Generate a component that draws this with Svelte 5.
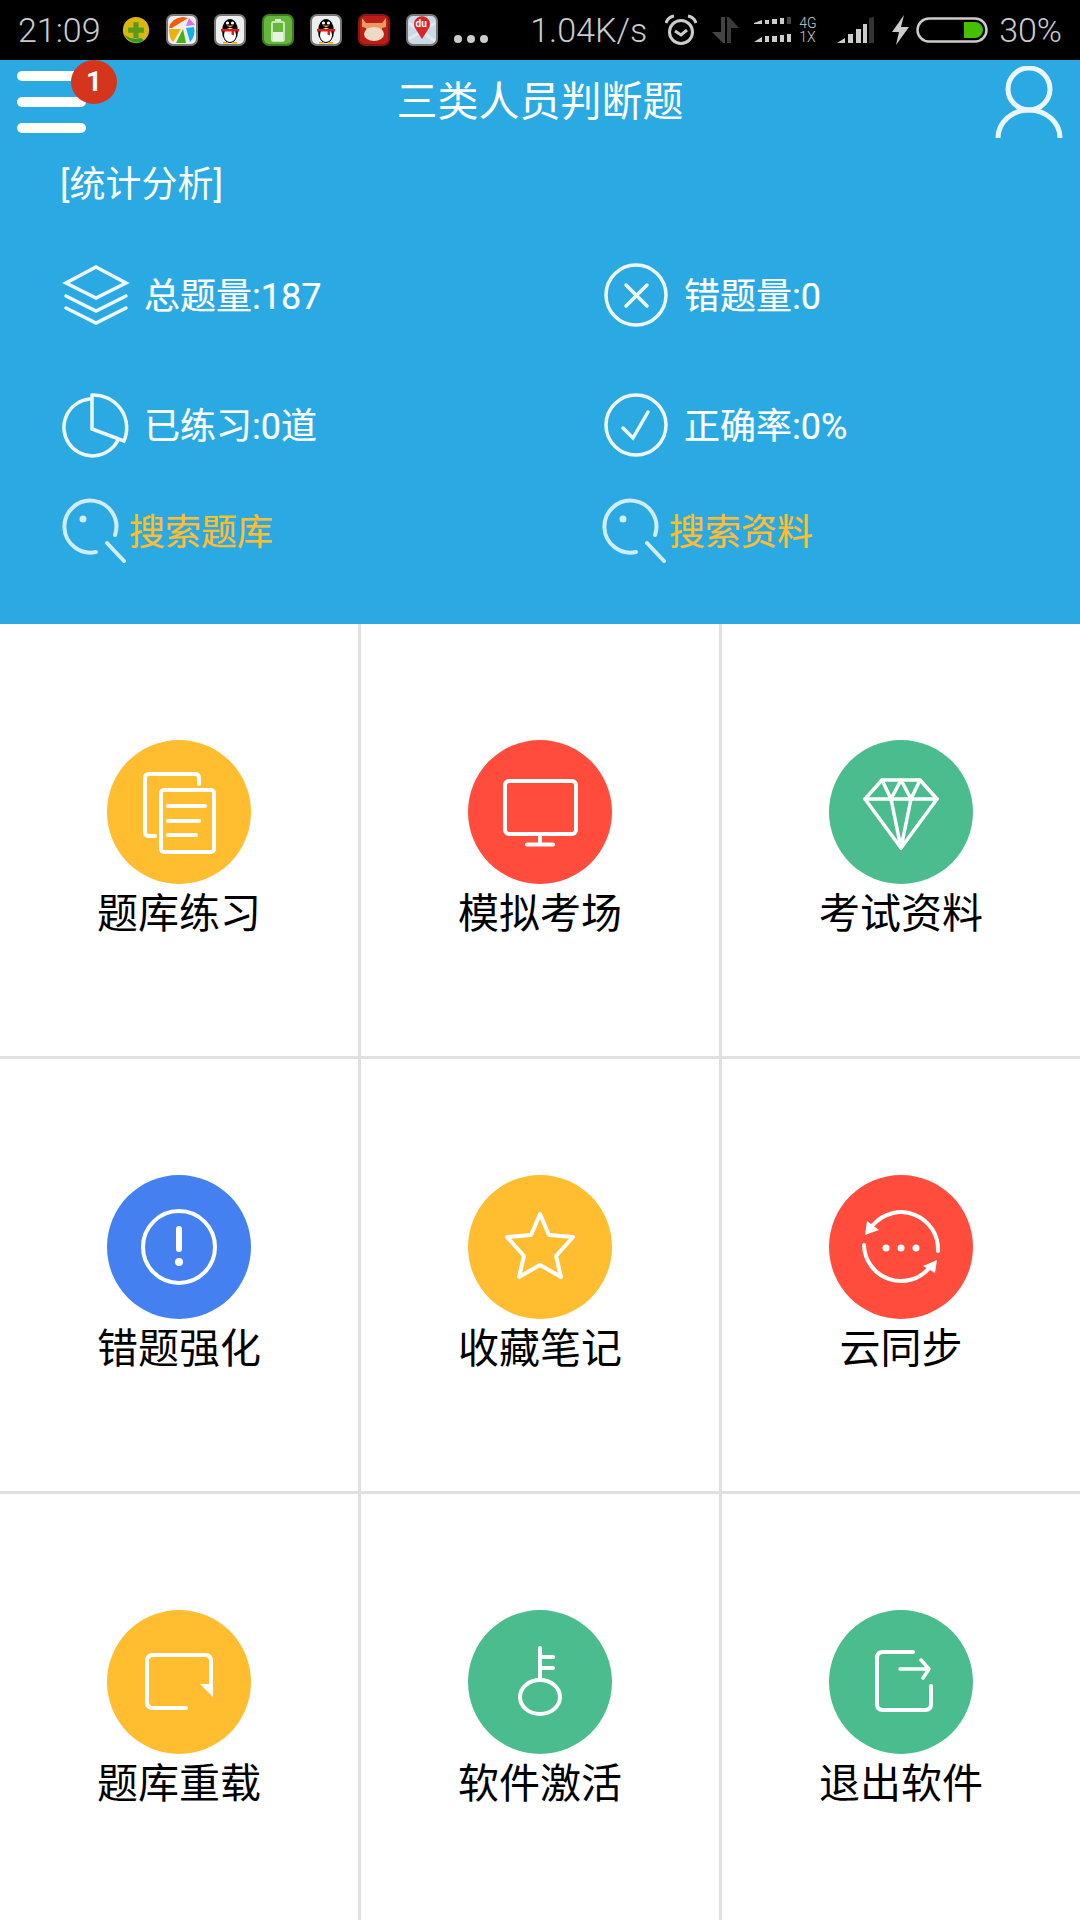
<script>
    const stats = [
        { icon: layersIcon, text: "总题量:187" },
        { icon: wrongIcon, text: "错题量:0" },
        { icon: pieIcon, text: "已练习:0道" },
        { icon: rightIcon, text: "正确率:0%" },
    ];

    const menu = [
        { label: "题库练习", color: "#ffbd2f", icon: docsIcon },
        { label: "模拟考场", color: "#ff4c3c", icon: screenIcon },
        { label: "考试资料", color: "#4bbc8e", icon: gemIcon },
        { label: "错题强化", color: "#4480f0", icon: alertIcon },
        { label: "收藏笔记", color: "#ffbd2f", icon: starIcon },
        { label: "云同步", color: "#ff4c3c", icon: syncIcon },
        { label: "题库重载", color: "#ffbd2f", icon: reloadIcon },
        { label: "软件激活", color: "#4bbc8e", icon: keyIcon },
        { label: "退出软件", color: "#4bbc8e", icon: exitIcon },
    ];
</script>

{#snippet penguin()}
    <svg class="tile" viewBox="0 0 32 32">
        <rect x="1" y="1" width="30" height="30" rx="6" fill="#eee" stroke="#777" stroke-width="2" />
        <ellipse cx="16" cy="17" rx="8" ry="12" fill="#000" />
        <ellipse cx="16" cy="21" rx="6" ry="7" fill="#fff" />
        <circle cx="13.5" cy="9" r="1.6" fill="#fff" />
        <circle cx="18.5" cy="9" r="1.6" fill="#fff" />
        <path d="M12.5 11.5h7l-3.500 2z" fill="#f5a800" />
        <path d="M7 15h18v2.500h-5v4l-2.500-1v-3H7z" fill="#e01b1b" />
        <path d="M9 28h5v1.500H9zM18 28h5v1.500h-5z" fill="#f5a800" />
    </svg>
{/snippet}

{#snippet layersIcon()}
    <svg class="stat-icon" viewBox="0 0 64 64">
        <path d="M32 4 62 20 32 35 2 20z" />
        <path d="M2 33 32 48 62 33" />
        <path d="M2 45 32 60 62 45" />
    </svg>
{/snippet}

{#snippet wrongIcon()}
    <svg class="stat-icon" viewBox="0 0 64 64">
        <circle cx="32" cy="32" r="30" />
        <path d="M22 22 43 43M43 22 22 43" />
    </svg>
{/snippet}

{#snippet pieIcon()}
    <svg class="stat-icon" viewBox="0 0 64 64">
        <path d="M26 6A28.500 28.500 0 1 0 54 47" />
        <path d="M28 2V36L60 48A33 33 0 0 0 28 2" />
    </svg>
{/snippet}

{#snippet rightIcon()}
    <svg class="stat-icon" viewBox="0 0 64 64">
        <circle cx="32" cy="32" r="30" />
        <path d="M19 35 29 45 44 19" />
    </svg>
{/snippet}

{#snippet searchIcon()}
    <svg class="stat-icon search-icon" viewBox="0 0 64 64">
        <path d="M33 53A26 26 0 1 1 52 36" />
        <path d="M44 44 61 62" />
        <circle class="solid" cx="20" cy="20" r="3.500" />
    </svg>
{/snippet}

{#snippet docsIcon()}
    <path d="M92 44V38Q92 34 88 34H42Q38 34 38 38V92Q38 96 42 96H48" />
    <rect x="54" y="50" width="53" height="62" rx="3" />
    <path d="M61 66H98M61 81H92M61 95H89" />
{/snippet}

{#snippet screenIcon()}
    <rect x="37" y="41" width="71" height="53" rx="4" />
    <path d="M72 95V104" />
    <path d="M59 104.500H85" />
{/snippet}

{#snippet gemIcon()}
    <path class="thin" d="M53 40H91L108 59 72 108 36 59Z" />
    <path class="thin" d="M36 59H108M53 40 62 59 72 40 82 59 91 40M62 59 72 108 82 59" />
{/snippet}

{#snippet alertIcon()}
    <circle cx="72" cy="72" r="36" />
    <path class="wide" d="M72 54V74" />
    <circle class="solid" cx="72" cy="87" r="4" />
{/snippet}

{#snippet starIcon()}
    <path d="M72 39 81 60 105 62 88 81 93 102 72 90 51 102 56 81 39 62 63 60Z" />
{/snippet}

{#snippet syncIcon()}
    <path d="M109 76A37 37 0 0 0 44 50" />
    <path d="M35 70A37 37 0 0 0 101 92" />
    <path class="solid" d="M36 60 38 46 50 55Z" />
    <path class="solid" d="M108 85 106 98 94 91Z" />
    <circle class="solid" cx="57" cy="73" r="3.500" />
    <circle class="solid" cx="72" cy="73" r="3.500" />
    <circle class="solid" cx="87" cy="73" r="3.500" />
{/snippet}

{#snippet reloadIcon()}
    <path d="M79 98H46Q40 98 40 92V51Q40 45 46 45H98Q104 45 104 51V78" />
    <path class="solid" d="M93 74H106V87Z" />
{/snippet}

{#snippet keyIcon()}
    <ellipse cx="72" cy="87" rx="20" ry="17" />
    <path d="M72 38V69M72 47H85M72 58H85" />
{/snippet}

{#snippet exitIcon()}
    <path d="M84 42H54Q48 42 48 48V94Q48 100 54 100H96Q102 100 102 94V76" />
    <path class="thin" d="M71 59H99M92 50 100 59 94 68" />
{/snippet}

<div class="page">
    <div class="status-bar">
        <span class="clock">21:09</span>
        <div class="notifs">
            <svg class="tile round" viewBox="0 0 32 32">
                <circle cx="16" cy="16" r="15" fill="#d8b80e" />
                <path d="M3 21a15 15 0 0 0 22 7l-3-3q-12 3-19-4z" fill="#2f9a35" />
                <path d="M13 7h6v6h6v6h-6v6h-6v-6H7v-6h6z" fill="#5b9a1c" />
            </svg>
            <svg class="tile" viewBox="0 0 32 32">
                <rect x="1" y="1" width="30" height="30" rx="6" fill="#eee" stroke="#777" stroke-width="2" />
                <path d="M3 14Q5 4 17 3L22 4 6 14z" fill="#ee5c0c" />
                <path d="M3 15H15L7 28Q3 24 3 15z" fill="#edb00c" />
                <path d="M17 15 20 29H10z" fill="#45b20f" />
                <path d="M20 14 28 13Q30 22 24 28z" fill="#11b2e8" />
                <path d="M23 4 29 11 20 12z" fill="#d674e6" />
            </svg>
            {@render penguin()}
            <svg class="tile" viewBox="0 0 32 32">
                <rect x="1" y="1" width="30" height="30" rx="6" fill="#65b63a" stroke="#3d7d20" stroke-width="2" />
                <path d="M13 5h6v2h-6z" fill="#dcefd2" />
                <rect x="10" y="8" width="12" height="19" rx="1" fill="none" stroke="#e6f4df" stroke-width="1.500" />
                <rect x="11" y="18" width="10" height="9" fill="#e6f4df" />
            </svg>
            {@render penguin()}
            <svg class="tile" viewBox="0 0 32 32">
                <rect x="1" y="1" width="30" height="30" rx="6" fill="#bb1e16" stroke="#8a1610" stroke-width="2" />
                <path d="M4 4l4 5h16l4-5v9l-4 1v4H8v-4l-4-1z" fill="#e89a60" />
                <ellipse cx="16" cy="20" rx="10" ry="7" fill="#eed9c4" />
            </svg>
            <div class="map-tile">
                <svg class="tile" viewBox="0 0 32 32">
                    <rect x="1" y="1" width="30" height="30" rx="6" fill="#c9dbe6" stroke="#777" stroke-width="2" />
                    <path d="M3 25 29 9M3 9 29 27" stroke="#e8e8e8" stroke-width="3" />
                    <path d="M16 25 9 14a8 8 0 1 1 14 0z" fill="#d8252a" />
                </svg>
                <span>du</span>
            </div>
            <div class="more"><i></i><i></i><i></i></div>
        </div>

        <div class="status-right">
            <span class="speed">1.04K/s</span>
            <svg class="alarm" viewBox="0 0 32 32">
                <circle cx="16" cy="18" r="11.500" />
                <path d="M10 17 16 21 22 16" />
                <path d="M1 9Q3 3 9 2M31 9Q29 3 23 2" />
            </svg>
            <svg class="arrows" viewBox="0 0 28 26">
                <path d="M10 0h4v26h-2L1 15h9z" fill="#444" />
                <path d="M16 0h2l10 11H20v15h-4z" fill="#3a3a3a" />
            </svg>
            <svg class="dots-signal" viewBox="0 0 37 26">
                <path d="M0 6 8 3V7H0zM11 3h4v4h-4zM18 2h5v5h-5zM26 1h4v6h-4z" fill="#ccc" />
                <path d="M33 0h4v7h-4z" fill="#444" />
                <path d="M0 25 8 20V25H0zM11 19h4v6h-4zM18 19h5v6h-5zM26 18h4v7h-4zM33 17h4v8h-4z" fill="#ccc" />
            </svg>
            <div class="net-type"><span>4G</span><span>1X</span></div>
            <svg class="bars" viewBox="0 0 37 26">
                <path d="M0 26 8 21V26zM11 17h5v9h-5zM19 12h5v14h-5z" fill="#ccc" />
                <path d="M26 7h4v19h-4z" fill="#ccc" />
                <path d="M32 1 37 0V26H32z" fill="#333" />
            </svg>
            <svg class="bolt" viewBox="0 0 17 30">
                <path d="M12 0 0 17H7L4 30 17 12H9z" fill="#ccc" />
            </svg>
            <svg class="battery" viewBox="0 0 72 26">
                <rect x="1.500" y="1.500" width="69" height="23" rx="11.500" fill="none" stroke="#ccc" stroke-width="2.500" />
                <path d="M48 5H58A8 8 0 0 1 67 13A8 8 0 0 1 58 21H48z" fill="#44c000" />
            </svg>
            <span class="percent">30%</span>
        </div>
    </div>

    <header class="panel">
        <div class="topbar">
            <div class="menu-btn">
                <span></span><span></span><span></span>
                <b class="badge">1</b>
            </div>
            <h1>三类人员判断题</h1>
            <svg class="user" viewBox="0 0 68 72">
                <circle cx="34" cy="23" r="21" />
                <path d="M3 72A31 28 0 0 1 65 72" />
            </svg>
        </div>

        <div class="section">[统计分析]</div>

        <div class="stats">
            {#each stats as stat}
                <div class="stat">
                    {@render stat.icon()}
                    <span>{stat.text}</span>
                </div>
            {/each}
        </div>

        <div class="searches">
            <div class="search">{@render searchIcon()}<span>搜索题库</span></div>
            <div class="search">{@render searchIcon()}<span>搜索资料</span></div>
        </div>
    </header>

    <main class="grid">
        {#each menu as item}
            <div class="cell">
                <svg class="disc" viewBox="0 0 144 144">
                    <circle class="solid-bg" cx="72" cy="72" r="72" style="fill: {item.color}" />
                    {@render item.icon()}
                </svg>
                <span class="label">{item.label}</span>
            </div>
        {/each}
    </main>
</div>

<style>
    :global(body) {
        margin: 0;
        background: #fff;
    }

    .page {
        width: 1080px;
        height: 1920px;
        overflow: hidden;
        font-family: Roboto, "Noto Sans CJK SC", sans-serif;
    }

    .status-bar {
        height: 60px;
        background: #000;
        color: #ccc;
        display: flex;
        align-items: center;
        font-size: 34px;
        padding-left: 18px;
    }

    .clock,
    .speed,
    .percent {
        font-weight: 300;
    }

    .notifs {
        display: flex;
        align-items: center;
        gap: 16px;
        margin-left: 21px;
    }

    .tile {
        width: 32px;
        height: 32px;
        display: block;
    }

    .tile.round {
        width: 28px;
        height: 28px;
    }

    .map-tile {
        position: relative;
        font-size: 10px;
        font-weight: 700;
        color: #fff;
    }

    .map-tile span {
        position: absolute;
        left: 10px;
        top: 4px;
        line-height: 12px;
    }

    .more {
        display: flex;
        gap: 5px;
        margin-top: 18px;
    }

    .more i {
        width: 8px;
        height: 8px;
        border-radius: 50%;
        background: #ccc;
    }

    .status-right {
        margin-left: auto;
        padding-right: 18px;
        display: flex;
        align-items: center;
    }

    .alarm {
        width: 32px;
        height: 32px;
        margin-left: 18px;
        fill: none;
        stroke: #ccc;
        stroke-width: 3;
    }

    .arrows {
        width: 28px;
        height: 26px;
        margin-left: 14px;
    }

    .dots-signal {
        width: 37px;
        height: 26px;
        margin-left: 15px;
    }

    .net-type {
        display: flex;
        flex-direction: column;
        width: 20px;
        margin-left: 8px;
        font-size: 14px;
        line-height: 14px;
        font-weight: 300;
    }

    .bars {
        width: 37px;
        height: 26px;
        margin-left: 18px;
    }

    .bolt {
        width: 17px;
        height: 30px;
        margin-left: 18px;
    }

    .battery {
        width: 72px;
        height: 26px;
        margin-left: 7px;
    }

    .percent {
        margin-left: 11px;
    }

    .panel {
        height: 564px;
        box-sizing: border-box;
        background: #2ba9e3;
        color: #fff;
    }

    .topbar {
        height: 84px;
        display: flex;
        align-items: flex-start;
        justify-content: space-between;
        position: relative;
    }

    .menu-btn {
        width: 69px;
        margin: 11px 0 0 17px;
        display: flex;
        flex-direction: column;
        gap: 16px;
        position: relative;
    }

    .menu-btn span {
        height: 10px;
        border-radius: 5px;
        background: #fff;
    }

    .badge {
        position: absolute;
        left: 54px;
        top: -11px;
        width: 46px;
        height: 44px;
        border-radius: 50%;
        background: #d5351c;
        font-size: 28px;
        line-height: 44px;
        text-align: center;
        font-weight: 700;
    }

    h1 {
        position: absolute;
        left: 0;
        right: 0;
        top: 15px;
        margin: 0;
        text-align: center;
        font-size: 41px;
        line-height: 54px;
        font-weight: 400;
    }

    .user {
        width: 68px;
        height: 72px;
        margin: 6px 17px 0 0;
        fill: none;
        stroke: #fff;
        stroke-width: 5;
        opacity: 0.9;
        filter: blur(0.7px);
    }

    .section {
        height: 82px;
        padding-left: 60px;
        font-size: 36px;
        line-height: 82px;
    }

    .stats,
    .searches {
        display: grid;
        grid-template-columns: 540px 1fr;
        padding-left: 64px;
    }

    .stats {
        row-gap: 66px;
        margin-top: 37px;
    }

    .searches {
        margin-top: 42px;
    }

    .stat,
    .search {
        display: flex;
        align-items: center;
        height: 64px;
        font-size: 36px;
    }

    .stat {
        gap: 16px;
    }

    .stat span,
    .search span {
        margin-top: -5px;
        -webkit-text-stroke: 0.2px currentColor;
    }

    .search {
        gap: 2px;
        margin-left: -1px;
        color: #ffbd2f;
    }

    .stat-icon {
        width: 64px;
        height: 64px;
        flex: none;
        fill: none;
        stroke: #fff;
        stroke-width: 3.5;
        stroke-linecap: round;
        opacity: 0.92;
        overflow: visible;
        filter: blur(0.7px);
    }

    .search-icon {
        stroke: rgba(255, 255, 255, 0.85);
        stroke-width: 4;
    }

    .stat-icon .solid {
        fill: rgba(255, 255, 255, 0.85);
        stroke: none;
    }

    .grid {
        display: grid;
        grid-template-columns: 361px 361px 358px;
        grid-auto-rows: 435px;
    }

    .cell {
        box-sizing: border-box;
        border-right: 3px solid #e0e0e0;
        border-bottom: 3px solid #e0e0e0;
        padding-top: 116px;
        display: flex;
        flex-direction: column;
        align-items: center;
    }

    .cell:nth-child(3n) {
        border-right: none;
    }

    .disc {
        width: 144px;
        height: 144px;
        display: block;
        fill: none;
        stroke: #fff;
        stroke-width: 4;
        stroke-linecap: round;
        stroke-linejoin: round;
    }

    .disc .solid-bg {
        stroke: none;
    }

    .disc :global(.solid) {
        fill: #fff;
        stroke: none;
    }

    .disc :global(.thin) {
        stroke-width: 3.5;
    }

    .disc :global(.wide) {
        stroke-width: 6;
    }

    .label {
        font-size: 41px;
        line-height: 60px;
        color: #000;
    }
</style>
